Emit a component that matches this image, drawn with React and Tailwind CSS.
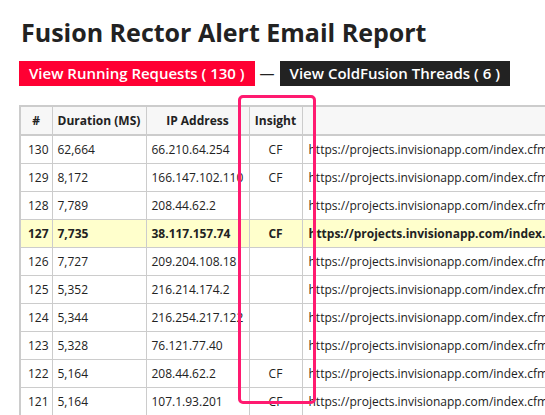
const rows = [
  { id: 130, duration: '62,664', ip: '66.210.64.254', insight: 'CF' },
  { id: 129, duration: '8,172', ip: '166.147.102.110', insight: 'CF' },
  { id: 128, duration: '7,789', ip: '208.44.62.2', insight: '' },
  { id: 127, duration: '7,735', ip: '38.117.157.74', insight: 'CF', highlight: true },
  { id: 126, duration: '7,727', ip: '209.204.108.18', insight: '' },
  { id: 125, duration: '5,352', ip: '216.214.174.2', insight: '' },
  { id: 124, duration: '5,344', ip: '216.254.217.122', insight: '' },
  { id: 123, duration: '5,328', ip: '76.121.77.40', insight: '' },
  { id: 122, duration: '5,164', ip: '208.44.62.2', insight: 'CF' },
  { id: 121, duration: '5,164', ip: '107.1.93.201', insight: 'CF' },
]

const url = 'https://projects.invisionapp.com/index.cfm/project/8239234/screens'

export default function App() {
  return (
    <div className="relative h-[415px] w-[545px] overflow-hidden bg-white font-['Open_Sans',sans-serif] text-[#222]">
      <div className="pl-[19px] pt-[14px]">
        <h1 className="pl-[2px] text-[25px] font-bold leading-[36px] text-[#222]">
          Fusion Rector Alert Email Report
        </h1>

        <div className="mt-[11px] flex items-center whitespace-nowrap text-[15px] font-semibold leading-[25px] text-white">
          <span className="h-[25px] bg-[#ff0033] px-[10px]">View Running Requests ( 130 )</span>
          <span className="px-[5px] font-normal text-[#222]">—</span>
          <span className="h-[25px] bg-[#222] px-[10px]">View ColdFusion Threads ( 6 )</span>
        </div>

        <table className="mt-[19px] w-[800px] table-fixed border-collapse border-2 border-[#ccc] text-[12px] leading-[27px]">
          <colgroup>
            <col className="w-[32px]" />
            <col className="w-[94px]" />
            <col className="w-[103px]" />
            <col className="w-[53px]" />
            <col />
          </colgroup>
          <thead>
            <tr className="whitespace-nowrap border-b-2 border-[#ccc] bg-[#f7f7f7] font-bold">
              <th className="border border-[#ccc] text-center">#</th>
              <th className="border border-[#ccc] px-[5px] text-left">Duration (MS)</th>
              <th className="border border-[#ccc] px-[5px] text-center">IP Address</th>
              <th className="border border-[#ccc] text-center">Insight</th>
              <th className="border border-[#ccc]"></th>
            </tr>
          </thead>
          <tbody>
            {rows.map((r) => (
              <tr key={r.id} className={r.highlight ? 'bg-[#ffffcc] font-bold' : ''}>
                <td className="border border-[#ccc] pr-[3px] text-right">{r.id}</td>
                <td className="border border-[#ccc] px-[5px]">{r.duration}</td>
                <td className="whitespace-nowrap border border-[#ccc] px-[5px]">{r.ip}</td>
                <td className="border border-[#ccc] text-center">{r.insight}</td>
                <td className="whitespace-nowrap border border-[#ccc] px-[6px]">{url}</td>
              </tr>
            ))}
          </tbody>
        </table>
      </div>

      <div className="absolute left-[238px] top-[95px] h-[309px] w-[78px] rounded-[5px] border-[3px] border-[#ff1a70]" />
    </div>
  )
}
